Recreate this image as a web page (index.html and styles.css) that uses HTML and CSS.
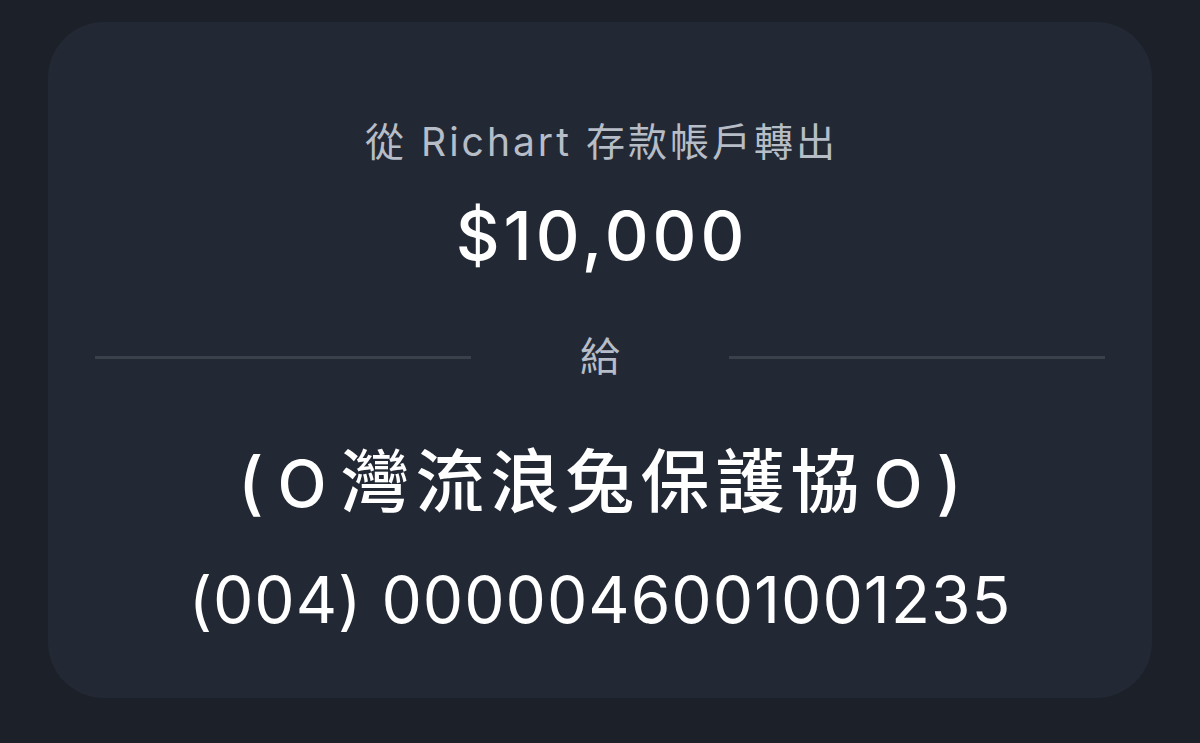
FILE: index.html
```html
<!DOCTYPE html>
<html lang="zh-Hant">
<head>
  <meta charset="UTF-8">
  <meta name="viewport" content="width=device-width, initial-scale=1.0">
  <title>轉帳確認</title>
  <link rel="stylesheet" href="styles.css">
</head>
<body>
  <main>
    <div class="card">
      <p class="from">從 Richart 存款帳戶轉出</p>
      <p class="amount">$10,000</p>
      <div class="divider">
        <span class="line"></span>
        <span class="to">給</span>
        <span class="line"></span>
      </div>
      <p class="payee">(<span class="mask">O</span>灣流浪兔保護協<span class="mask">O</span>)</p>
      <p class="account">(004) 0000046001001235</p>
    </div>
  </main>
</body>
</html>
```

FILE: styles.css
```css
* {
  box-sizing: border-box;
}

body {
  margin: 0;
  background-color: #1c2028;
  font-family: 'Inter', 'Noto Sans CJK TC', sans-serif;
  color: #fff;
}

main {
  padding: 22px 48px 45px;
}

.card {
  height: 676px;
  background-color: #232934;
  border-radius: 56px;
  padding: 96px 47px 0;
  text-align: center;
}

.card p {
  margin: 0;
}

.from {
  font-size: 39px;
  line-height: 48px;
  letter-spacing: 3px;
  text-indent: 3px;
  color: #b7bdc7;
}

.amount {
  margin-top: 33px !important;
  font-size: 68px;
  line-height: 72px;
  letter-spacing: 4px;
  text-indent: 4px;
  font-weight: 500;
}

.divider {
  display: flex;
  align-items: center;
  margin-top: 62px;
}

.line {
  flex: 1;
  height: 3px;
  background-color: #3b414b;
}

.to {
  width: 258px;
  font-size: 40px;
  line-height: 48px;
  color: #b7bdc7;
}

.payee {
  margin-top: 61px !important;
  font-size: 69px;
  line-height: 80px;
  letter-spacing: 6px;
  text-indent: 6px;
  font-weight: 500;
}

.payee .mask {
  margin: 0 8px;
  font-size: 64px;
}

.account {
  margin-top: 41px !important;
  font-size: 64px;
  line-height: 70px;
  letter-spacing: 1px;
}
```
